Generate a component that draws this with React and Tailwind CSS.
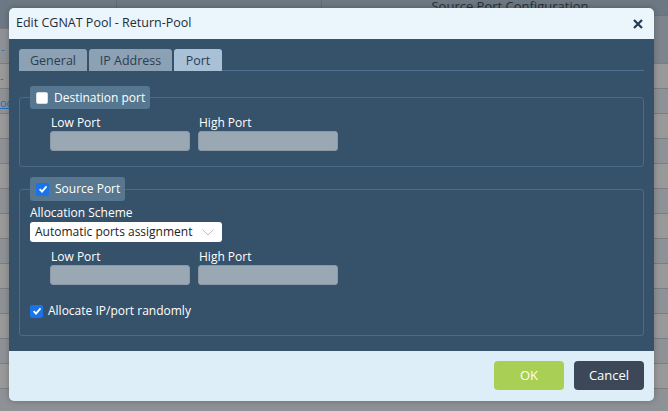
import React from 'react';

const FONT = { fontFamily: '"Open Sans", "Noto Sans", sans-serif' };

function Box({ checked }) {
  if (!checked) {
    return <span className="inline-block w-[12px] h-[12px] rounded-[2px] bg-white border border-[#d8dde2]" />;
  }
  return (
    <span className="inline-flex w-[13px] h-[13px] rounded-[2px] bg-[#1a73e8] items-center justify-center">
      <svg width="10" height="10" viewBox="0 0 10 10">
        <path d="M1.6 5.2 L4 7.6 L8.5 2.4" fill="none" stroke="#fff" strokeWidth="1.9" />
      </svg>
    </span>
  );
}

function PortFields() {
  return (
    <div className="grid grid-cols-[140px_140px] gap-x-[8px] pl-[20px]">
      <label className="text-[12px] leading-[16px] text-white pl-[1px]">Low Port</label>
      <label className="text-[12px] leading-[16px] text-white pl-[1px]">High Port</label>
      <div className="h-[20px] rounded-[3px] bg-[#9aa8b4] border border-[#8c9aa7]" />
      <div className="h-[20px] rounded-[3px] bg-[#9aa8b4] border border-[#8c9aa7]" />
    </div>
  );
}

const rows = Array.from({ length: 14 }, (_, i) => i);

export default function App() {
  return (
    <div className="relative w-[668px] h-[411px] overflow-hidden bg-[#939596]" style={FONT}>
      {/* page behind the modal */}
      <div className="flex flex-col">
        <div className="flex h-[15px] bg-[#6c7883]">
          <div className="w-[117px] border-r border-[#5f6b75]" />
          <div className="w-[205px] border-r border-[#5f6b75]" />
          <div className="flex-1 text-center text-[13px] leading-[12px] text-[#2b2f33] pl-[30px]">Source Port Configuration</div>
        </div>
        <div className="flex h-[48px]">
          <div className="w-[117px] flex flex-col">
            <div className="h-[13px] bg-[#6c7883]" />
            <div className="flex-1 bg-[#8e9296] border-t border-[#7a7d80] text-[11px] text-[#2a6fb0] pl-[1px] pt-[14px] leading-[12px]">-</div>
          </div>
          <div className="flex-1 bg-[#7d858c] border-t border-[#6a747c]" />
        </div>
        {rows.map((i) => (
          <div
            key={i}
            className={`h-[25px] border-t border-[#7b7d80] flex ${i % 2 === 0 ? 'bg-[#999999]' : 'bg-[#8e9296]'}`}
          >
            <div className="text-[11px] leading-[12px] text-[#2a6fb0] pt-[8px]">
              {i === 0 ? '-' : i === 1 ? <span className="underline">oo</span> : ''}
            </div>
          </div>
        ))}
      </div>

      {/* modal */}
      <div className="absolute left-[9px] top-[8px] w-[645px] h-[393px] rounded-[5px] overflow-hidden flex flex-col shadow-[0_0_6px_rgba(0,0,0,0.25)]">
        <div className="h-[31px] bg-[#eaf5fc] flex items-center justify-between pl-[7px] pr-[11px]">
          <span className="text-[12.5px] text-[#1f2d3a]">Edit CGNAT Pool - Return-Pool</span>
          <svg width="10" height="10" viewBox="0 0 10 10">
            <path d="M1 1 L9 9 M9 1 L1 9" stroke="#1e3c56" strokeWidth="2.2" />
          </svg>
        </div>

        <div className="h-[312px] bg-[#36526b] px-[10px] pt-[10px]">
          <div className="flex items-end h-[22px]">
            <div className="h-[22px] w-[68px] mr-[2px] rounded-t-[3px] bg-[#8ca1b4] text-[#2c3e50] text-[12.5px] leading-[22px] pt-[1px] text-center">General</div>
            <div className="h-[22px] w-[83px] mr-[2px] rounded-t-[3px] bg-[#8ca1b4] text-[#2c3e50] text-[12.5px] leading-[22px] pt-[1px] text-center">IP Address</div>
            <div className="h-[22px] w-[48px] rounded-t-[3px] bg-[#a9c1d6] text-[#2c3e50] text-[12.5px] leading-[22px] pt-[1px] text-center">Port</div>
            <div className="flex-1 border-b border-[#4f7090]" />
          </div>

          <fieldset className="mt-[15px] border border-[#4b6b87] rounded-[3px] px-[10px] pb-[15px]">
            <legend className="h-[23px] flex items-center gap-[6px] pl-[6px] pr-[5px] rounded-[3px] bg-[#56778f] text-[12px] text-white">
              <Box checked={false} />
              Destination port
            </legend>
            <div className="pt-[6px]">
              <PortFields />
            </div>
          </fieldset>

          <fieldset className="mt-[10px] border border-[#4b6b87] rounded-[3px] px-[10px] pb-[15px]">
            <legend className="h-[24px] flex items-center gap-[6px] pl-[6px] pr-[5px] rounded-[3px] bg-[#56778f] text-[12px] text-white">
              <Box checked />
              Source Port
            </legend>
            <div className="text-[12px] leading-[16px] text-white pt-[4px]">Allocation Scheme</div>
            <div className="mt-[1px] w-[192px] h-[20px] rounded-[3px] bg-white flex items-center justify-between pl-[5px] pr-[8px]">
              <span className="text-[12px] text-[#222]">Automatic ports assignment</span>
              <svg width="12" height="7" viewBox="0 0 12 7">
                <path d="M0.5 0.5 L6 6 L11.5 0.5" fill="none" stroke="#b7bcc2" strokeWidth="1" />
              </svg>
            </div>
            <div className="mt-[7px]">
              <PortFields />
            </div>
            <div className="mt-[17px] flex items-center gap-[5px] text-[12px] text-white">
              <Box checked />
              Allocate IP/port randomly
            </div>
          </fieldset>
        </div>

        <div className="flex-1 bg-[#ddeef8] flex justify-end items-start pt-[10px] pr-[10px] gap-[10px]">
          <button className="w-[70px] h-[29px] rounded-[4px] bg-[#a9d055] text-white text-[13px]">OK</button>
          <button className="w-[70px] h-[29px] rounded-[4px] bg-[#3c4858] text-white text-[13px]">Cancel</button>
        </div>
      </div>
    </div>
  );
}
